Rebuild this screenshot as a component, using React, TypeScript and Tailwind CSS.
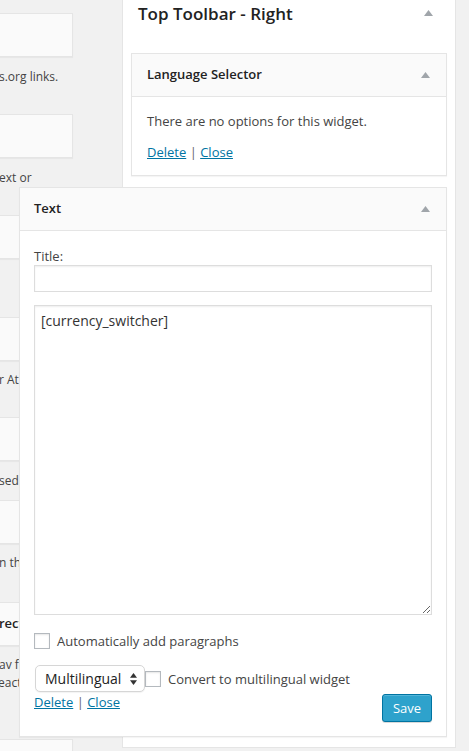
import React from 'react'

function Caret({ className = '' }: { className?: string }) {
  return (
    <svg className={className} width="9" height="6" viewBox="0 0 9 6" fill="#a0a5aa">
      <polygon points="4.5,0 9,6 0,6" />
    </svg>
  )
}

function Card({ className = '', children }: { className?: string; children?: React.ReactNode }) {
  return (
    <div
      className={`shrink-0 w-[73px] h-[44px] bg-[#fafafa] border border-l-0 border-[#e5e5e5] shadow-[0_1px_1px_rgba(0,0,0,0.04)] flex items-center overflow-hidden whitespace-nowrap ${className}`}
    >
      {children}
    </div>
  )
}

function Desc({ className = '', children }: { className?: string; children: React.ReactNode }) {
  return <div className={`shrink-0 text-[12px] leading-[18px] whitespace-nowrap ${className}`}>{children}</div>
}

function AvailableWidgets() {
  return (
    <div className="w-[122px] shrink-0 flex flex-col overflow-hidden">
      <Card className="mt-[13px]" />
      <Desc className="mt-[11px] -ml-[1px]">s.org links.</Desc>
      <Card className="mt-[28px]" />
      <Desc className="mt-[11px] -ml-[1px]">ext or</Desc>
      <Card className="mt-[28px]" />
      <Card className="mt-[58px]" />
      <Desc className="mt-[10px] -ml-[1px]">r Atom or RSS feed.</Desc>
      <Card className="mt-[28px]" />
      <Desc className="mt-[11px] -ml-[1px]">sed on the site.</Desc>
      <Card className="mt-[10px]" />
      <Desc className="mt-[10px] -ml-[1px]">n the site.</Desc>
      <Card className="mt-[30px] h-[43px]">
        <span className="font-semibold text-[#222] -ml-[1px]">rectory</span>
      </Card>
      <Desc className="mt-[10px] -ml-[1px]">av first.</Desc>
      <Desc className="-ml-[2px]">eactivate.</Desc>
      <Card className="mt-[47px]" />
    </div>
  )
}

function Checkbox() {
  return (
    <span className="block w-[16px] h-[16px] shrink-0 bg-white border border-[#b4b9be] shadow-[inset_0_1px_2px_rgba(0,0,0,0.1)]" />
  )
}

function ActionLinks() {
  return (
    <div className="leading-[18px]">
      <a href="#" className="text-[#0074a2] underline">Delete</a>
      <span className="text-[#666]"> | </span>
      <a href="#" className="text-[#0074a2] underline">Close</a>
    </div>
  )
}

function Sidebar() {
  return (
    <div className="w-[334px] shrink-0 self-start bg-white border-x border-b border-[#e5e5e5] pb-[10px]">
      <div className="flex items-center justify-between pt-[4px] pl-[15px] pr-[22px]">
        <h3 className="text-[17px] leading-[20px] font-semibold text-[#222]">Top Toolbar - Right</h3>
        <Caret className="mb-[2px]" />
      </div>

      <div className="mt-[29px] mx-[8px] bg-white border border-[#e5e5e5] shadow-[0_1px_1px_rgba(0,0,0,0.04)]">
        <div className="h-[43px] bg-[#fafafa] border-b border-[#e5e5e5] flex items-center justify-between pl-[15px] pr-[16px]">
          <h4 className="font-semibold text-[#222]">Language Selector</h4>
          <Caret />
        </div>
        <div className="px-[15px] pt-[15px] pb-[14px]">
          <p className="leading-[18px]">There are no options for this widget.</p>
          <div className="mt-[13px]">
            <ActionLinks />
          </div>
        </div>
      </div>

      <div className="relative z-10 mt-[11px] ml-[-104px] mr-[8px] bg-white border border-[#e5e5e5] shadow-[0_1px_1px_rgba(0,0,0,0.04)]">
        <div className="h-[43px] bg-[#fafafa] border-b border-[#e5e5e5] flex items-center justify-between pl-[14px] pr-[16px]">
          <h4 className="font-semibold text-[#222]">Text</h4>
          <Caret />
        </div>
        <div className="px-[14px] pt-[16px] pb-[14px]">
          <label className="block leading-[18px]">Title:</label>
          <input
            type="text"
            className="block w-full h-[27px] bg-white border border-[#ddd] shadow-[inset_0_1px_2px_rgba(0,0,0,0.07)] outline-none"
          />
          <textarea
            readOnly
            defaultValue="[currency_switcher]"
            className="block w-full h-[310px] mt-[13px] px-[6px] pt-[6px] text-[14px] leading-[17px] text-[#333] font-['Open_Sans',sans-serif] bg-white border border-[#ddd] shadow-[inset_0_1px_2px_rgba(0,0,0,0.07)] outline-none resize-y"
          />
          <div className="mt-[17px] flex items-center gap-[7px]">
            <Checkbox />
            <span className="leading-[18px]">Automatically add paragraphs</span>
          </div>
          <div className="mt-[15px] flex items-center">
            <div className="ml-[1px] w-[110px] h-[27px] flex items-center justify-between pl-[9px] pr-[7px] bg-white border border-[#d6d6d6] rounded-[5px] shadow-[0_1px_1px_rgba(0,0,0,0.05)] text-[14px] text-[#222]">
              <span>Multilingual</span>
              <svg width="7" height="12" viewBox="0 0 7 12" fill="#333">
                <polygon points="3.5,0 7,4.8 0,4.8" />
                <polygon points="0,7.2 7,7.2 3.5,12" />
              </svg>
            </div>
            <Checkbox />
            <span className="ml-[7px] leading-[18px]">Convert to multilingual widget</span>
          </div>
          <div className="mt-[1px] flex items-start justify-between">
            <ActionLinks />
            <button className="mt-[1px] w-[50px] h-[28px] rounded-[3px] bg-[#2ea2cc] border border-[#0074a2] shadow-[inset_0_1px_0_rgba(120,200,230,0.5),0_1px_0_rgba(0,0,0,0.15)] text-white text-[13px] leading-[26px]">
              Save
            </button>
          </div>
        </div>
      </div>
    </div>
  )
}

export default function App() {
  return (
    <div className="h-[751px] overflow-hidden flex bg-[#f1f1f1] font-['Open_Sans',sans-serif] text-[13px] text-[#444]">
      <AvailableWidgets />
      <Sidebar />
    </div>
  )
}
